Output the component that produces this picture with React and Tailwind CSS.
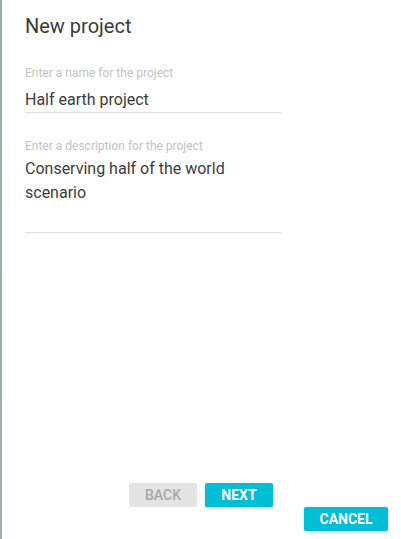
import { useState } from 'react'

function Field({ label, value, onChange, multiline }) {
  return (
    <div className="w-[256px] border-b border-[#e0e0e0]">
      <label className="block text-[12px] leading-[16px] text-[#c2c2c2]">{label}</label>
      {multiline ? (
        <textarea
          rows={3}
          className="mt-[3px] block h-[75px] w-full resize-none bg-transparent text-[16px] leading-[24px] text-[#3c3c3c] outline-none"
          value={value}
          onChange={(e) => onChange(e.target.value)}
        />
      ) : (
        <input
          type="text"
          className="mt-[6px] block h-[25px] w-full bg-transparent text-[16px] leading-[24px] text-[#3c3c3c] outline-none"
          value={value}
          onChange={(e) => onChange(e.target.value)}
        />
      )}
    </div>
  )
}

export default function App() {
  const [name, setName] = useState('Half earth project')
  const [description, setDescription] = useState('Conserving half of the world scenario')

  return (
    <div className="flex h-[539px] w-full bg-white font-['Roboto',sans-serif]">
      <div className="w-[2px] bg-gradient-to-b from-[#8fb0a1] via-[#9aaea5] to-[#a0aca7]"></div>
      <div className="flex flex-1 flex-col pl-[23px]">
        <h1 className="mt-[14px] text-[20px] font-normal leading-[24px] text-[#3a3a3a]">New project</h1>

        <div className="mt-[27px]">
          <Field label="Enter a name for the project" value={name} onChange={setName} />
        </div>
        <div className="mt-[25px]">
          <Field
            label="Enter a description for the project"
            value={description}
            onChange={setDescription}
            multiline
          />
        </div>

        <div className="flex-1"></div>

        <div className="flex gap-[8px] pl-[104px]">
          <button className="h-[24px] w-[68px] rounded-[2px] bg-[#e4e4e4] text-[14px] font-medium text-[#a8a8a8]">
            BACK
          </button>
          <button className="h-[24px] w-[68px] rounded-[2px] bg-[#00bed6] text-[14px] font-bold text-white shadow-[0_1px_3px_rgba(0,0,0,0.2)]">
            NEXT
          </button>
        </div>
        <div className="mb-[8px] flex justify-end pr-[13px]">
          <button className="h-[24px] w-[84px] rounded-[2px] bg-[#00bed6] text-[14px] font-bold text-white shadow-[0_1px_3px_rgba(0,0,0,0.2)]">
            CANCEL
          </button>
        </div>
      </div>
    </div>
  )
}
